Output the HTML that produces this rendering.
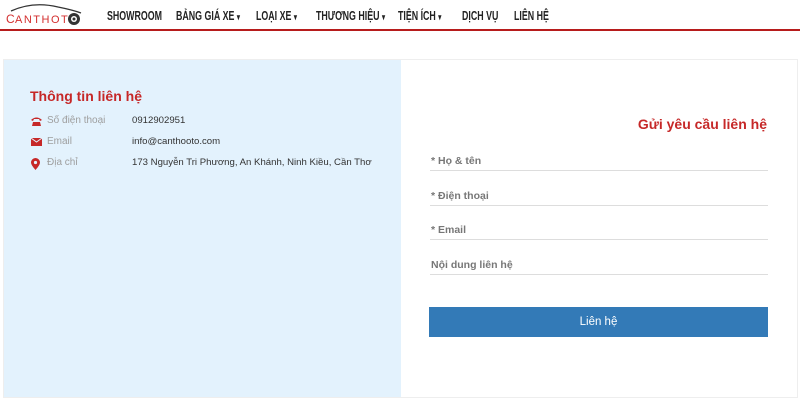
<!DOCTYPE html>
<html><head><meta charset="utf-8"><style>
*{margin:0;padding:0;box-sizing:border-box}
body{width:800px;height:402px;background:#fff;font-family:"Liberation Sans",sans-serif;position:relative;overflow:hidden}
.nav{position:absolute;top:0;left:0;width:800px;height:31px;border-bottom:2px solid #b71c1c;background:#fff}
.nav span{position:absolute;top:8px;font-weight:bold;font-size:13px;color:#222;white-space:nowrap;transform:scaleX(0.68);transform-origin:0 0}
.c{font-size:9px}
.wrap{position:absolute;left:3px;top:59px;width:795px;height:339px;border:1px solid #eee}
.left{position:absolute;left:0;top:0;width:397px;height:337px;background:#e3f2fd}
.t{position:absolute;color:#c62828;font-weight:bold;font-size:14px}
.row{position:absolute;left:27px;font-size:10px;height:14px}
.row .l{position:absolute;left:16px;color:#9e9e9e;white-space:nowrap}
.row .v{position:absolute;left:101px;color:#333;white-space:nowrap;font-size:9.6px}
.row svg{position:absolute;left:0;top:1px}
.f{position:absolute;left:426px;width:338px;height:1px;background:#ddd}
.fl{position:absolute;left:427px;font-size:10.5px;color:#777;font-weight:bold}
.btn{position:absolute;left:425px;top:247px;width:339px;height:30px;background:#337ab7;color:#fff;font-size:11.5px;text-align:center;line-height:30px}
</style></head><body>
<div class="nav">
<svg style="position:absolute;left:3px;top:3px" width="80" height="24" viewBox="0 0 80 24">
<path d="M8 8 Q30 -2 55 4 Q70 7 78 10" fill="none" stroke="#333" stroke-width="1.3"/>
<text x="3" y="20" font-family="Liberation Sans" font-size="12" fill="#d32f2f" letter-spacing="1">C</text>
<text x="12" y="20" font-family="Liberation Sans" font-size="11" fill="#d32f2f" letter-spacing="1.5">ANTHOT</text>
<circle cx="71" cy="16" r="6" fill="#333"/><circle cx="71" cy="16" r="3" fill="#fff"/><circle cx="71" cy="16" r="1.5" fill="#333"/>
</svg>
<span style="left:107px">SHOWROOM</span>
<span style="left:176px">BẢNG GIÁ XE <b class="c">▾</b></span>
<span style="left:256px">LOẠI XE <b class="c">▾</b></span>
<span style="left:316px">THƯƠNG HIỆU <b class="c">▾</b></span>
<span style="left:398px">TIỆN ÍCH <b class="c">▾</b></span>
<span style="left:462px">DỊCH VỤ</span>
<span style="left:514px">LIÊN HỆ</span>
</div>
<div class="wrap">
<div class="left"></div>
<div class="t" style="left:26px;top:28px">Thông tin liên hệ</div>
<div class="row" style="top:55px"><svg width="11" height="10" viewBox="0 0 11 10"><path d="M0 4 Q5.5 -1 11 4 L9 5 L8 3 L3 3 L2 5Z M2 6 L9 6 L10 10 L1 10Z" fill="#c62828"/></svg><span class="l">Số điện thoại</span><span class="v">0912902951</span></div>
<div class="row" style="top:76px"><svg width="11" height="9" viewBox="0 0 11 9"><rect x="0" y="1" width="11" height="8" fill="#c62828"/><path d="M0 1 L5.5 5 L11 1" stroke="#e3f2fd" fill="none"/></svg><span class="l">Email</span><span class="v">info@canthooto.com</span></div>
<div class="row" style="top:97px"><svg width="9" height="12" viewBox="0 0 9 12"><path d="M4.5 0 A4.5 4.5 0 0 1 9 4.5 Q9 7 4.5 12 Q0 7 0 4.5 A4.5 4.5 0 0 1 4.5 0Z" fill="#c62828"/><circle cx="4.5" cy="4.5" r="1.6" fill="#e3f2fd"/></svg><span class="l">Địa chỉ</span><span class="v">173 Nguyễn Tri Phương, An Khánh, Ninh Kiều, Cần Thơ</span></div>
<div class="t" style="right:30px;top:56px">Gửi yêu cầu liên hệ</div>
<div class="fl" style="top:95px">* Họ &amp; tên</div><div class="f" style="top:110px"></div>
<div class="fl" style="top:130px">* Điện thoại</div><div class="f" style="top:145px"></div>
<div class="fl" style="top:164px">* Email</div><div class="f" style="top:179px"></div>
<div class="fl" style="top:199px">Nội dung liên hệ</div><div class="f" style="top:214px"></div>
<div class="btn">Liên hệ</div>
</div>
</body></html>
